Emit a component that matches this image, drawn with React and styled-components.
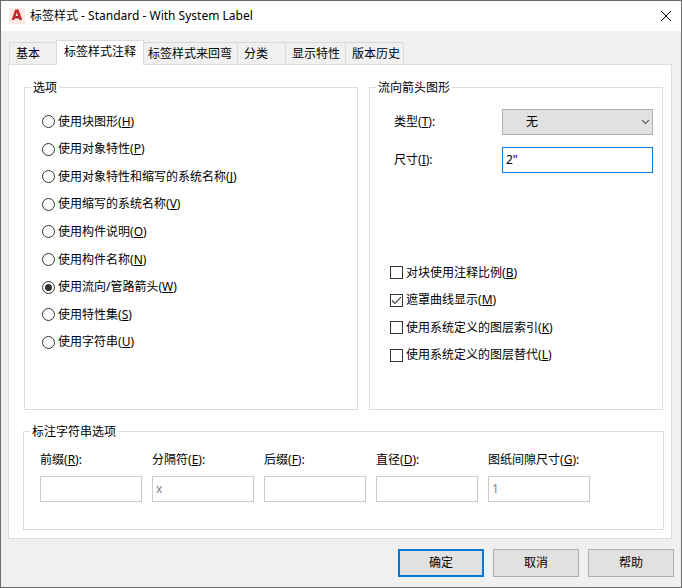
import React, { useState } from "react";
import styled, { createGlobalStyle } from "styled-components";

const tabs = ["基本", "标签样式注释", "标签样式来回弯", "分类", "显示特性", "版本历史"];

// [text, access key]
const labelOptions = [
  ["使用块图形", "H"],
  ["使用对象特性", "P"],
  ["使用对象特性和缩写的系统名称", "J"],
  ["使用缩写的系统名称", "V"],
  ["使用构件说明", "O"],
  ["使用构件名称", "N"],
  ["使用流向/管路箭头", "W"],
  ["使用特性集", "S"],
  ["使用字符串", "U"],
];

const arrowOptions = [
  ["对块使用注释比例", "B"],
  ["遮罩曲线显示", "M"],
  ["使用系统定义的图层索引", "K"],
  ["使用系统定义的图层替代", "L"],
];

const stringFields = [
  { id: "prefix", text: "前缀", hotkey: "R", value: "" },
  { id: "separator", text: "分隔符", hotkey: "E", value: "x" },
  { id: "suffix", text: "后缀", hotkey: "F", value: "" },
  { id: "diameter", text: "直径", hotkey: "D", value: "" },
  { id: "gap", text: "图纸间隙尺寸", hotkey: "G", value: "1" },
];

const Hotkey = ({ children }) => (
  <>
    (<Key>{children}</Key>)
  </>
);

const App = () => {
  const [activeTab, setActiveTab] = useState("标签样式注释");
  const [option, setOption] = useState("W");
  const [checked, setChecked] = useState({ M: true });
  const [size, setSize] = useState('2"');

  const toggle = (key) => setChecked({ ...checked, [key]: !checked[key] });

  return (
    <>
      <GlobalStyle />
      <Dialog>
        <TitleBar>
          <Logo />
          <Title>标签样式 - Standard - With System Label</Title>
          <CloseButton type="button" aria-label="关闭">
            <svg width="12" height="12" viewBox="0 0 12 12">
              <path d="M1 1L11 11M11 1L1 11" stroke="#000" strokeWidth="1" fill="none" />
            </svg>
          </CloseButton>
        </TitleBar>

        <Body>
          <TabList role="tablist">
            {tabs.map((tab) => (
              <Tab
                key={tab}
                type="button"
                role="tab"
                aria-selected={tab === activeTab}
                $active={tab === activeTab}
                onClick={() => setActiveTab(tab)}
              >
                {tab}
              </Tab>
            ))}
          </TabList>

          <Panel role="tabpanel">
            <Columns>
              <Group>
                <legend>选项</legend>
                <RadioList>
                  {labelOptions.map(([text, key]) => (
                    <Choice key={key}>
                      <Radio name="label-option" checked={option === key} onChange={() => setOption(key)} />
                      <span>{text}<Hotkey>{key}</Hotkey></span>
                    </Choice>
                  ))}
                </RadioList>
              </Group>

              <Group>
                <legend>流向箭头图形</legend>
                <ArrowForm>
                  <label htmlFor="arrow-type">类型<Hotkey>T</Hotkey>:</label>
                  <SelectBox>
                    <select id="arrow-type" defaultValue="none">
                      <option value="none">无</option>
                    </select>
                    <svg width="9" height="6" viewBox="0 0 9 6">
                      <path d="M1 1L4.5 4.5L8 1" stroke="#606060" strokeWidth="1.2" fill="none" />
                    </svg>
                  </SelectBox>
                  <label htmlFor="arrow-size">尺寸<Hotkey>I</Hotkey>:</label>
                  <TextInput id="arrow-size" $focused value={size} onChange={(e) => setSize(e.target.value)} />
                </ArrowForm>
                <CheckList>
                  {arrowOptions.map(([text, key]) => (
                    <Choice key={key}>
                      <CheckBox>
                        <input type="checkbox" checked={!!checked[key]} onChange={() => toggle(key)} />
                        <svg width="13" height="13" viewBox="0 0 13 13">
                          <path d="M2 6.5L5 9.5L11 3.2" stroke="#444" strokeWidth="1.2" fill="none" />
                        </svg>
                      </CheckBox>
                      <span>{text}<Hotkey>{key}</Hotkey></span>
                    </Choice>
                  ))}
                </CheckList>
              </Group>
            </Columns>

            <Group>
              <legend>标注字符串选项</legend>
              <StringFields>
                {stringFields.map((field) => (
                  <Field key={field.id}>
                    <label htmlFor={field.id}>{field.text}<Hotkey>{field.hotkey}</Hotkey>:</label>
                    <TextInput id={field.id} defaultValue={field.value} disabled />
                  </Field>
                ))}
              </StringFields>
            </Group>
          </Panel>
        </Body>

        <Footer>
          <DialogButton type="submit" $primary>确定</DialogButton>
          <DialogButton type="button">取消</DialogButton>
          <DialogButton type="button">帮助</DialogButton>
        </Footer>
      </Dialog>
    </>
  );
};
export default App;

const Logo = () => (
  <svg width="16" height="16" viewBox="0 0 16 16" aria-hidden="true">
    <rect width="16" height="16" fill="#fce8e3" />
    <path d="M6.2 1.6H9.6L13.2 12H10.4L9.8 10.2H5.8L5.2 12H2.6ZM7.8 4.4L6.6 8H9Z" fill="#c8282f" fillRule="evenodd" />
    <path d="M5.8 10.2L9 8L9.8 10.2Z" fill="#8e1a20" />
  </svg>
);

////STYLING
const GlobalStyle = createGlobalStyle`
  * {
    box-sizing: border-box;
  }
  body {
    margin: 0;
    color: #000;
    background: #f0f0f0;
  }
  body, button, input, select {
    font: 12px/16px "Noto Sans", "Noto Sans CJK SC", sans-serif;
  }
`;

const Key = styled.u`
  text-underline-offset: 1px;
  text-decoration-skip-ink: none;
`;

const Dialog = styled.form`
  display: flex;
  flex-direction: column;
  min-height: 100vh;
  border: 1px solid #6a6a6a;
  background: #f0f0f0;
`;

const TitleBar = styled.header`
  display: flex;
  align-items: center;
  height: 30px;
  padding: 0 9px 0 8px;
  background: #fff;
`;

const Title = styled.h1`
  flex: 1;
  margin: 0 0 0 5px;
  font-size: 12px;
  font-weight: 400;
`;

const CloseButton = styled.button`
  display: flex;
  padding: 0;
  border: 0;
  background: none;
`;

const Body = styled.main`
  flex: 1;
  display: flex;
  flex-direction: column;
  padding: 9px 9px 0 7px;
`;

const TabList = styled.div`
  display: flex;
  align-items: flex-end;
  padding-left: 1px;
`;

const Tab = styled.button`
  height: 22px;
  min-width: 48px;
  padding: 0 5px 0 6px;
  border: 1px solid #d9d9d9;
  border-width: 1px 0 0 1px;
  background: #f0f0f0;
  color: #000;
  text-align: left;

  &:last-child {
    padding-right: 3px;
    border-right-width: 1px;
  }

  ${(props) => props.$active && `
    position: relative;
    height: 25px;
    margin: 0 -3px -1px -1px;
    padding: 0 7px 2px;
    border-width: 1px 1px 0;
    background: #fff;
  `}
`;

const Panel = styled.div`
  flex: 1;
  display: flex;
  flex-direction: column;
  gap: 14px;
  padding: 15px 7px 8px 14px;
  border: 1px solid #dcdcdc;
  background: #fff;
`;

const Columns = styled.div`
  flex: 1;
  display: grid;
  grid-template-columns: 334fr 294fr;
  gap: 11px;
  padding: 0 1px;
`;

const Group = styled.fieldset`
  min-width: 0;
  margin: 0;
  padding: 0;
  border: 1px solid #dcdcdc;

  > legend {
    margin-left: 6px;
    padding: 0 2px;
    line-height: 15px;
  }
`;

const RadioList = styled.div`
  display: grid;
  grid-auto-rows: 1fr;
  min-height: 248px;
  margin: 13px 17px 53px;
`;

const CheckList = styled.div`
  display: grid;
  grid-auto-rows: 1fr;
  min-height: 110px;
  margin: 86px 20px 40px;
`;

const Choice = styled.label`
  display: flex;
  align-items: center;
  gap: 3px;
`;

const Radio = styled.input.attrs({ type: "radio" })`
  appearance: none;
  width: 13px;
  height: 13px;
  margin: 0;
  border: 1px solid #333;
  border-radius: 50%;
  background: #fff;

  &:checked {
    padding: 2px;
    background: #333 content-box;
  }
`;

const CheckBox = styled.span`
  display: grid;

  > * {
    grid-area: 1 / 1;
  }
  input {
    appearance: none;
    width: 13px;
    height: 13px;
    margin: 0;
    border: 1px solid #333;
    background: #fff;
  }
  svg {
    pointer-events: none;
    visibility: hidden;
  }
  input:checked + svg {
    visibility: visible;
  }
`;

const ArrowForm = styled.div`
  display: grid;
  grid-template-columns: 108px 1fr;
  align-items: center;
  row-gap: 12px;
  padding: 14px 9px 0 24px;
`;

const SelectBox = styled.div`
  display: grid;
  align-items: center;

  > * {
    grid-area: 1 / 1;
  }
  select {
    appearance: none;
    width: 100%;
    height: 26px;
    padding: 0 20px 0 23px;
    border: 1px solid #adadad;
    border-radius: 0;
    background: #e1e1e1;
    color: #000;
  }
  svg {
    justify-self: end;
    margin-right: 3px;
    pointer-events: none;
  }
`;

const TextInput = styled.input`
  width: 100%;
  height: 26px;
  padding: 0 3px 2px;
  border: 1px solid ${(props) => (props.$focused ? "#0078d7" : "#cccccc")};
  border-radius: 0;
  outline: none;
  background: #fff;
  color: #000;

  &:disabled {
    color: #838383;
  }
`;

const StringFields = styled.div`
  display: grid;
  grid-template-columns: repeat(5, 1fr);
  gap: 10px;
  padding: 13px 73px 27px 16px;
`;

const Field = styled.div`
  display: flex;
  flex-direction: column;
  gap: 8px;
  white-space: nowrap;
`;

const Footer = styled.footer`
  display: flex;
  justify-content: flex-end;
  gap: 9px;
  padding: 10px 7px;
`;

const DialogButton = styled.button`
  width: 86px;
  height: 28px;
  padding: 0;
  border: ${(props) => (props.$primary ? "2px solid #0078d7" : "1px solid #adadad")};
  background: #e1e1e1;
  color: #000;
`;
